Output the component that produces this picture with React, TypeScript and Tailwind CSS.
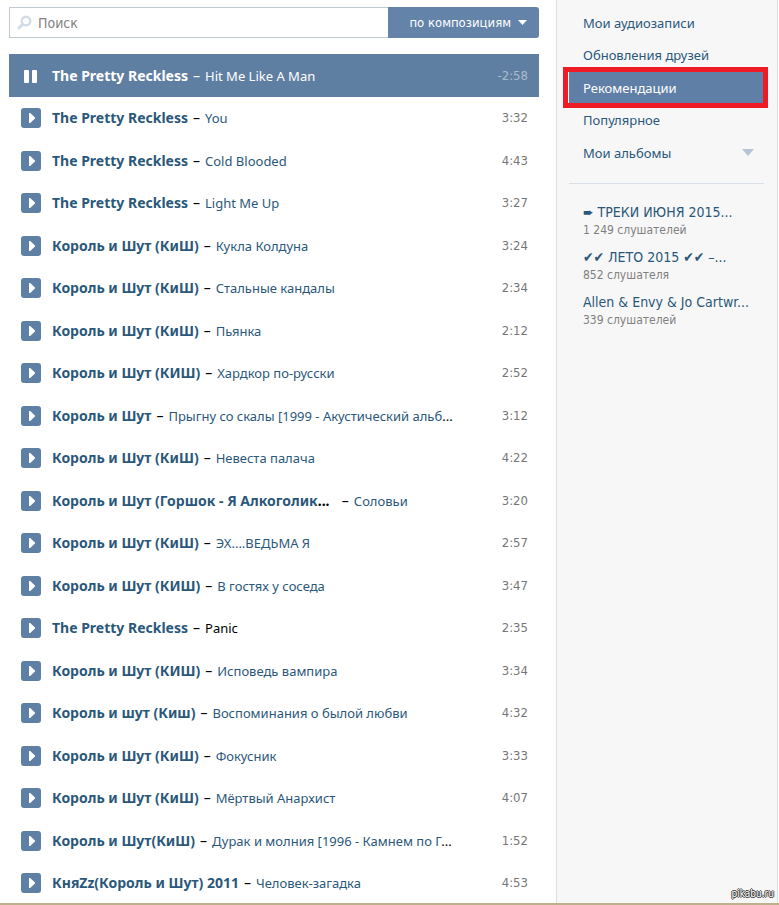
import { useState } from "react";

type Track = {
    artist: string;
    title: string;
    time: string;
    plainTitle?: boolean;
};

const tracks: Track[] = [
    { artist: "The Pretty Reckless", title: "Hit Me Like A Man", time: "-2:58" },
    { artist: "The Pretty Reckless", title: "You", time: "3:32" },
    { artist: "The Pretty Reckless", title: "Cold Blooded", time: "4:43" },
    { artist: "The Pretty Reckless", title: "Light Me Up", time: "3:27" },
    { artist: "Король и Шут (КиШ)", title: "Кукла Колдуна", time: "3:24" },
    { artist: "Король и Шут (КиШ)", title: "Стальные кандалы", time: "2:34" },
    { artist: "Король и Шут (КиШ)", title: "Пьянка", time: "2:12" },
    { artist: "Король и Шут (КИШ)", title: "Хардкор по-русски", time: "2:52" },
    { artist: "Король и Шут", title: "Прыгну со скалы [1999 - Акустический альб...", time: "3:12" },
    { artist: "Король и Шут (КиШ)", title: "Невеста палача", time: "4:22" },
    { artist: "Король и Шут (Горшок - Я Алкоголик...", title: "Соловьи", time: "3:20" },
    { artist: "Король и Шут (КиШ)", title: "ЭХ....ВЕДЬМА Я", time: "2:57" },
    { artist: "Король и Шут (КИШ)", title: "В гостях у соседа", time: "3:47" },
    { artist: "The Pretty Reckless", title: "Panic", time: "2:35", plainTitle: true },
    { artist: "Король и Шут (КИШ)", title: "Исповедь вампира", time: "3:34" },
    { artist: "Король и шут (Киш)", title: "Воспоминания о былой любви", time: "4:32" },
    { artist: "Король и Шут (КиШ)", title: "Фокусник", time: "3:33" },
    { artist: "Король и Шут (КиШ)", title: "Мёртвый Анархист", time: "4:07" },
    { artist: "Король и Шут(КиШ)", title: "Дурак и молния [1996 - Камнем по Г...", time: "1:52" },
    { artist: "КняZz(Король и Шут) 2011", title: "Человек-загадка", time: "4:53" },
];

const sections = ["Мои аудиозаписи", "Обновления друзей", "Рекомендации", "Популярное", "Мои альбомы"];

const albums = [
    { title: "➨ ТРЕКИ ИЮНЯ 2015...", listeners: "1 249 слушателей" },
    { title: "✔✔ ЛЕТО 2015 ✔✔ –...", listeners: "852 слушателя" },
    { title: "Allen & Envy & Jo Cartwr...", listeners: "339 слушателей" },
];

// trailing dots of a cut-off name stay black
function Cut({ text }: { text: string }) {
    if (!text.endsWith("...")) return <>{text}</>;
    return (
        <>
            {text.slice(0, -3)}
            <span className="text-black">...</span>
        </>
    );
}

function PlayIcon() {
    return (
        <svg className="block" width="20" height="20" viewBox="0 0 20 20" aria-hidden="true">
            <rect width="20" height="20" rx="3" fill="#5f80a5" />
            <path d="M8 5h1.2L14 9.4v1.2L9.2 15H8z" fill="#fff" />
        </svg>
    );
}

function PauseIcon() {
    return (
        <svg className="block" width="20" height="20" viewBox="0 0 20 20" aria-hidden="true">
            <rect x="3" y="4" width="5" height="13" rx="1" fill="#fff" />
            <rect x="11" y="4" width="5" height="13" rx="1" fill="#fff" />
        </svg>
    );
}

function TrackRow({ track, active, onPlay }: { track: Track; active: boolean; onPlay: () => void }) {
    return (
        <li className={`flex shrink-0 items-center pr-[11px] pl-3 odd:h-[43px] even:h-[42px] ${active ? "bg-[#5f7fa2] text-white" : "text-black"}`}>
            <button type="button" onClick={onPlay} aria-label={`${track.artist} – ${track.title}`} className="mr-[11px] size-5 shrink-0 cursor-pointer">
                {active ? <PauseIcon /> : <PlayIcon />}
            </button>
            <div className="min-w-0 flex-1 truncate font-['Noto_Sans','DejaVu_Sans',sans-serif] text-[14px] leading-5">
                <a href="#" className={`font-bold ${active ? "text-white" : "text-[#2b587a]"}`}>
                    <Cut text={track.artist} />
                </a>
                {track.artist.endsWith("...") && "\u00a0\u00a0"}
                <span className="mx-[5px]">–</span>
                <span className={`text-[13px] ${active ? "text-white" : track.plainTitle ? "text-black" : "text-[#2b587a]"}`}>
                    <Cut text={track.title} />
                </span>
            </div>
            <span className={`text-[13px] leading-5 ${active ? "text-[#a9bbcf]" : "text-[#777777]"}`}>{track.time}</span>
        </li>
    );
}

export default function App() {
    const [playing, setPlaying] = useState(0);
    const [section, setSection] = useState(2);

    return (
        <div className="flex h-screen flex-col overflow-hidden bg-white font-['DejaVu_Sans_Condensed','DejaVu_Sans',sans-serif]">
            <div className="flex min-h-0 flex-1 overflow-hidden pr-px">
                <main className="min-w-0 flex-1 pt-[7px] pr-[17px] pl-[9px]">
                    <form className="flex h-[31px]" onSubmit={(e) => e.preventDefault()}>
                        <label className="flex min-w-0 flex-1 items-center border border-r-0 border-[#c0cad5] pl-[7px]">
                            <svg className="shrink-0" width="15" height="15" viewBox="0 0 15 15" fill="none" aria-hidden="true">
                                <circle cx="9" cy="6" r="4.3" stroke="#d3dde8" strokeWidth="2.4" />
                                <path d="M5.5 9.5L2 12.8" stroke="#d3dde8" strokeWidth="3" strokeLinecap="round" />
                            </svg>
                            <input type="text" placeholder="Поиск" aria-label="Поиск" className="ml-[6px] w-full min-w-0 text-[14px] leading-5 outline-none placeholder:text-[#828282]" />
                        </label>
                        <button type="button" className="flex w-[151px] shrink-0 cursor-pointer items-center justify-end gap-[7px] rounded-r-[3px] bg-[#6383a8] pr-3 text-[13px] leading-5 text-white">
                            по композициям
                            <svg width="9" height="5" viewBox="0 0 9 5" aria-hidden="true">
                                <path d="M0 0h9L4.5 5z" fill="#fff" />
                            </svg>
                        </button>
                    </form>
                    <ul className="mt-4 flex flex-col">
                        {tracks.map((track, i) => (
                            <TrackRow key={i} track={track} active={i === playing} onPlay={() => setPlaying(i)} />
                        ))}
                    </ul>
                </main>
                <aside className="w-[222px] shrink-0 border-x border-[#d9e0e7] bg-[#f7f7f7] pt-[6px] pr-[13px] pl-3">
                    <nav>
                        {sections.map((name, i) => (
                            <div key={name} className="relative odd:h-[33px] even:h-8">
                                <button
                                    type="button"
                                    onClick={() => setSection(i)}
                                    className={`flex h-full w-full cursor-pointer items-center justify-between pr-[10px] pl-[14px] text-left font-['Noto_Sans','DejaVu_Sans',sans-serif] text-[13px] leading-5 ${i === section ? "bg-[#5f7fa6] text-white" : "text-[#2b587a]"}`}
                                >
                                    {name}
                                    {i === sections.length - 1 && (
                                        <svg width="12" height="7" viewBox="0 0 12 7" aria-hidden="true">
                                            <path d="M0 0h12L6 7z" fill="#b5c5d6" />
                                        </svg>
                                    )}
                                </button>
                                {i === 2 && <div className="pointer-events-none absolute -inset-y-1 -right-1 -left-[6px] border-[5px] border-[#ee1b24]"></div>}
                            </div>
                        ))}
                    </nav>
                    <ul className="mt-[14px] flex flex-col gap-[9px] border-t border-[#d9e0e7] pt-[18px] pl-[14px]">
                        {albums.map((album) => (
                            <li key={album.title}>
                                <a href="#" className="block text-[14px] leading-5 whitespace-nowrap text-[#2b587a]">{album.title}</a>
                                <div className="text-[12px] leading-4 text-[#808080]">{album.listeners}</div>
                            </li>
                        ))}
                    </ul>
                </aside>
            </div>
            <footer className="h-[2px] shrink-0 bg-[#bfb08c]"></footer>
            <div className="absolute right-[5px] bottom-[4px] text-[10px] leading-[14px] text-white [text-shadow:1px_0_#333,-1px_0_#333,0_1px_#333,0_-1px_#333]">pikabu.ru</div>
        </div>
    );
}
